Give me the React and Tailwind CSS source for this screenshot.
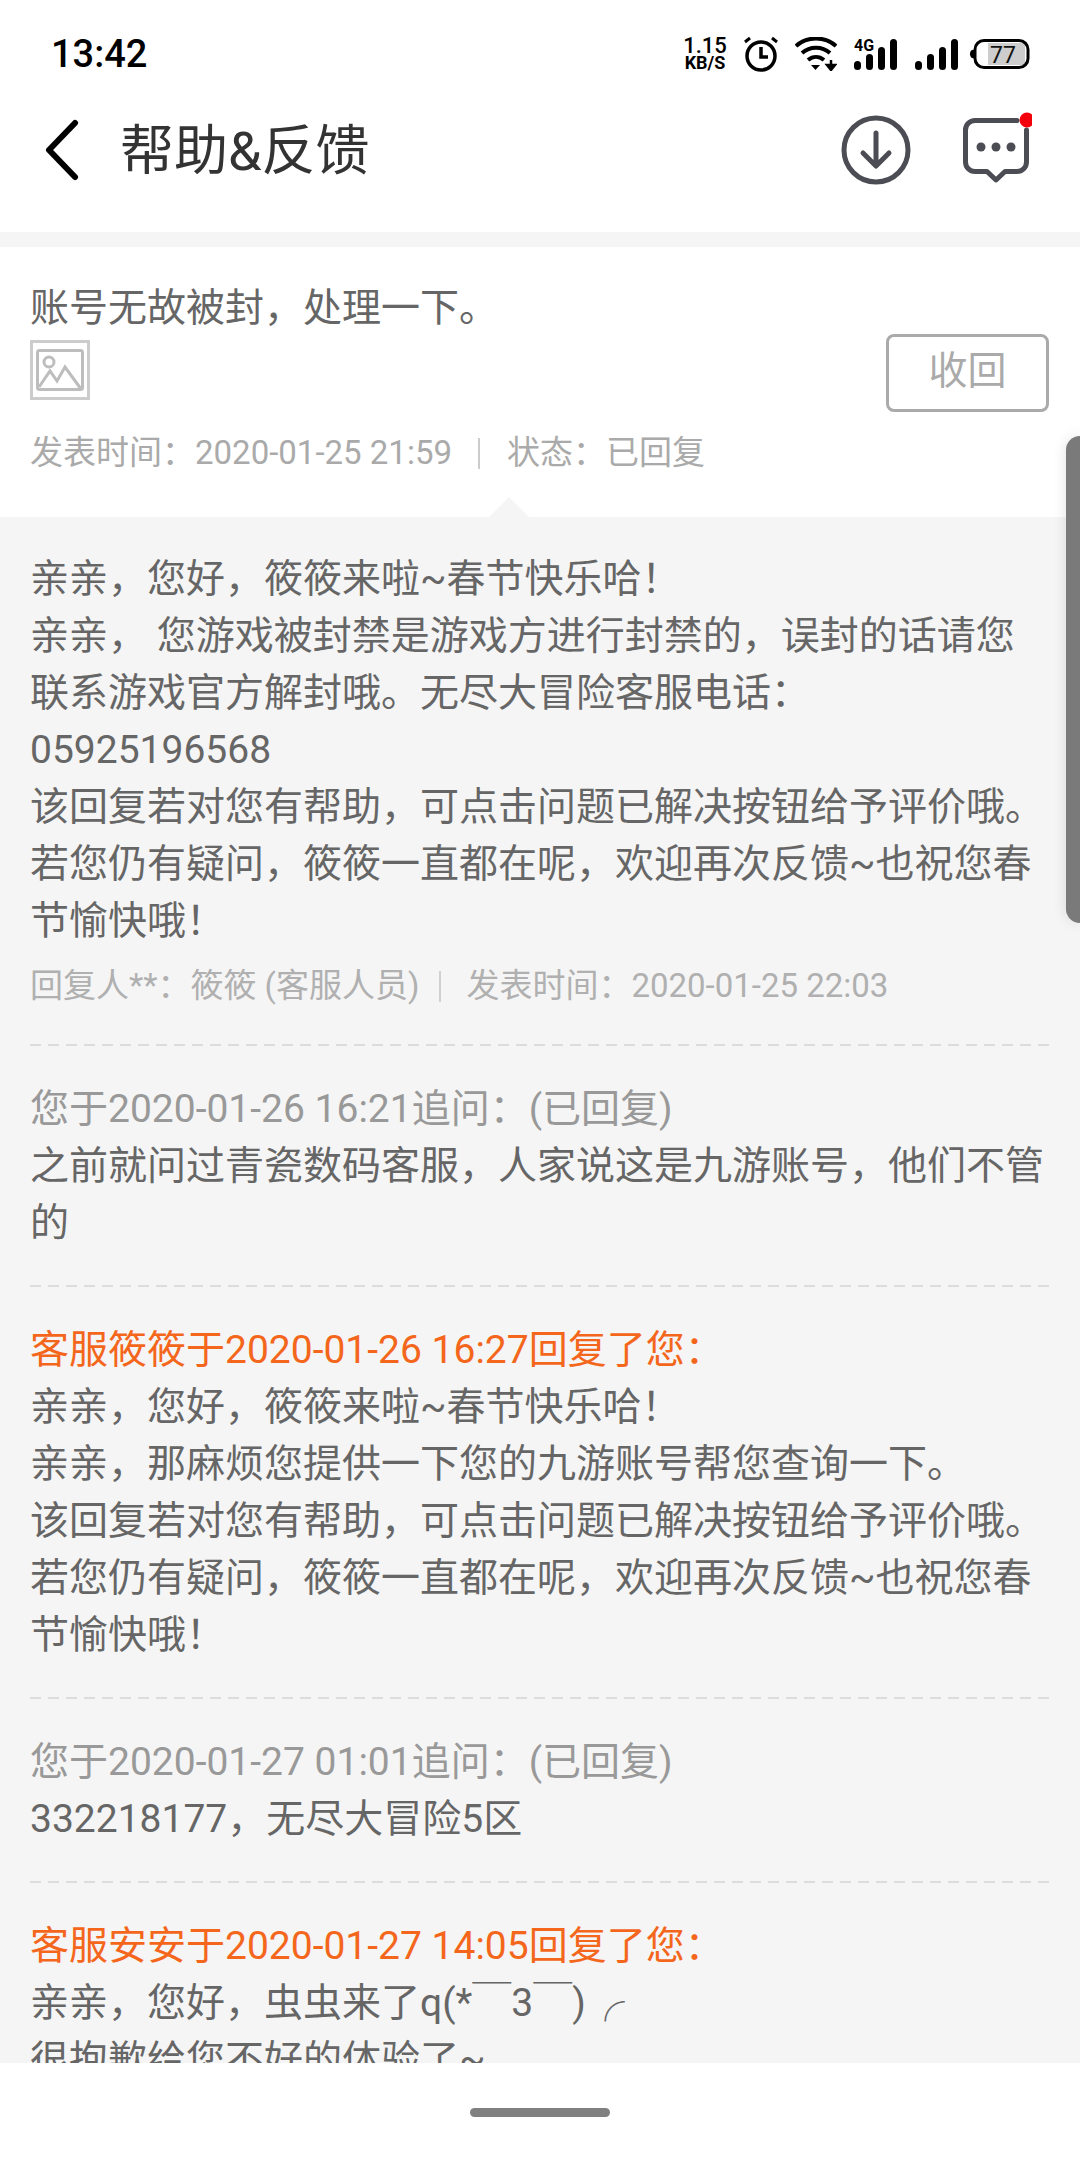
import React from "react";

const firstReply = [
  "亲亲，您好，筱筱来啦~春节快乐哈！",
  "亲亲， 您游戏被封禁是游戏方进行封禁的，误封的话请您",
  "联系游戏官方解封哦。无尽大冒险客服电话：",
  "05925196568",
  "该回复若对您有帮助，可点击问题已解决按钮给予评价哦。",
  "若您仍有疑问，筱筱一直都在呢，欢迎再次反馈~也祝您春",
  "节愉快哦！",
];

const secondReply = [
  "亲亲，您好，筱筱来啦~春节快乐哈！",
  "亲亲，那麻烦您提供一下您的九游账号帮您查询一下。",
  "该回复若对您有帮助，可点击问题已解决按钮给予评价哦。",
  "若您仍有疑问，筱筱一直都在呢，欢迎再次反馈~也祝您春",
  "节愉快哦！",
];

function Lines({ lines }) {
  return (
    <>
      {lines.map((line, i) => (
        <div key={i} className="h-[57px] leading-[57px] whitespace-nowrap">
          {line}
        </div>
      ))}
    </>
  );
}

function Dashed() {
  return (
    <div className="h-[2px] w-[1020px] bg-[repeating-linear-gradient(90deg,#dcdcdc_0,#dcdcdc_11px,transparent_11px,transparent_18px)]" />
  );
}

function Section({ title, titleClass, lines }) {
  return (
    <div className="pt-[35px] pb-[33px]">
      <div className={`h-[57px] leading-[57px] whitespace-nowrap ${titleClass}`}>{title}</div>
      <Lines lines={lines} />
    </div>
  );
}

function SignalBars({ className }) {
  return (
    <svg className={className} width="43" height="31" viewBox="0 0 43 31" fill="#000">
      <rect x="0" y="22" width="7" height="9" rx="3.5" />
      <rect x="12" y="15" width="7" height="16" rx="3.5" />
      <rect x="24" y="8" width="7" height="23" rx="3.5" />
      <rect x="36" y="0" width="7" height="31" rx="3.5" />
    </svg>
  );
}

function StatusBar() {
  return (
    <div className="h-[108px] flex items-center justify-between pl-[51px] pr-[50px]">
      <span className="text-[38px] font-medium text-black leading-none">13:42</span>
      <div className="flex items-center">
        <div className="w-[44px] flex flex-col items-center font-bold text-black leading-none">
          <span className="text-[22px] h-[17px] leading-[17px] font-medium">1.15</span>
          <span className="text-[18px] h-[17px] leading-[17px]">KB/S</span>
        </div>
        <svg className="ml-[16px]" width="36" height="36" viewBox="0 0 36 36" fill="none" stroke="#000">
          <circle cx="18" cy="20" r="14" strokeWidth="3.5" />
          <path d="M18 11v10h7" strokeWidth="3.5" />
          <path d="M2 6l5-4M34 6l-5-4" strokeWidth="3" />
        </svg>
        <svg className="ml-[16px]" width="42" height="34" viewBox="0 0 42 34" fill="none" stroke="#000">
          <path d="M1 9C12-1 30-1 41 9" strokeWidth="4" />
          <path d="M7 16c8-7 20-7 28 0" strokeWidth="4" />
          <path d="M13 23c5-4 11-4 16 0" strokeWidth="4" />
          <path d="M16 28h9l-4.500 5z" fill="#000" stroke="none" />
          <path d="M36 23v7M32 28h8l-4 5z" fill="#000" strokeWidth="2.500" />
        </svg>
        <div className="relative ml-[17px] w-[43px] h-[31px]">
          <SignalBars />
          <span className="absolute left-0 top-0 text-[16px] font-bold text-black leading-[13px]">4G</span>
        </div>
        <SignalBars className="ml-[18px]" />
        <svg className="ml-[12px]" width="60" height="30" viewBox="0 0 60 30">
          <path d="M0 15a3 4 0 0 1 4-4v8a3 4 0 0 1-4-4z" fill="#000" />
          <rect x="18" y="4" width="37" height="22" fill="#cdcdcd" />
          <rect x="5" y="1.500" width="53" height="27" rx="9" fill="none" stroke="#000" strokeWidth="3" />
          <text x="20" y="24" fontSize="23" fontFamily="Roboto" fill="#111">77</text>
        </svg>
      </div>
    </div>
  );
}

function Header() {
  return (
    <div className="h-[124px] pb-[40px] flex items-center pl-[44px] pr-[48px]">
      <svg width="38" height="64" viewBox="0 0 38 64" fill="none" stroke="#000" strokeWidth="6" strokeLinecap="round" strokeLinejoin="round">
        <path d="M31 5 5 32l26 27" />
      </svg>
      <span className="ml-[38px] mt-[3px] text-[54px] text-[#333] leading-none">帮助&amp;反馈</span>
      <div className="ml-auto flex items-center">
        <svg width="70" height="70" viewBox="0 0 70 70" fill="none" stroke="#4c4c54" strokeWidth="5" strokeLinecap="round" strokeLinejoin="round">
          <circle cx="35" cy="35" r="32" />
          <path d="M35 18v32M22 38l13 13 13-13" />
        </svg>
        <svg className="ml-[49px] mb-[4px]" width="72" height="72" viewBox="0 0 72 72" fill="none">
          <path d="M57 8.500H15a9.500 9.500 0 0 0-9.500 9.500v32a9.500 9.500 0 0 0 9.500 9.500h12l9 8.500 9-8.500h12a9.500 9.500 0 0 0 9.500-9.500V18" stroke="#4c4c54" strokeWidth="5" strokeLinecap="round" strokeLinejoin="round" />
          <circle cx="21" cy="35" r="4.500" fill="#4c4c54" />
          <circle cx="36" cy="35" r="4.500" fill="#4c4c54" />
          <circle cx="51" cy="35" r="4.500" fill="#4c4c54" />
          <circle cx="67" cy="8" r="7.500" fill="#f4000c" />
        </svg>
      </div>
    </div>
  );
}

function QuestionCard() {
  return (
    <div className="relative bg-white h-[270px] mt-[15px] px-[30px] pt-[33px] text-[#aaa]">
      <div className="text-[39px] leading-[57px] h-[57px] text-[#666]">账号无故被封，处理一下。</div>
      <div className="w-[60px] h-[60px] mt-[3px] border-[3px] border-[#ccc] flex items-center justify-center">
        <svg width="48" height="42" viewBox="0 0 48 42" fill="none" stroke="#bdbdbd" strokeWidth="3">
          <rect x="1.500" y="1.500" width="45" height="39" rx="2" />
          <circle cx="13" cy="13" r="5" />
          <path d="M3 38l11-16 7 10 8-14 16 22" />
        </svg>
      </div>
      <div className="mt-[31px] text-[33px] leading-[44px] flex items-center whitespace-nowrap">
        <span>发表时间：2020-01-25 21:59</span>
        <span className="w-[2px] h-[31px] bg-[#ccc] ml-[26px] mr-[27px]" />
        <span>状态：已回复</span>
      </div>
      <button className="absolute right-[31px] top-[87px] w-[163px] h-[78px] border-[3px] border-[#aaa] rounded-[8px] text-[39px] leading-none pb-[3px] text-[#aaa]">
        收回
      </button>
      {/* pointer into the reply area */}
      <div className="absolute left-[489px] bottom-0 w-0 h-0 border-l-[20px] border-r-[20px] border-b-[20px] border-l-transparent border-r-transparent border-b-[#f5f5f5]" />
    </div>
  );
}

function Thread() {
  return (
    <div className="flex-1 min-h-0 overflow-hidden bg-[#f5f5f5] px-[30px] pt-[34px] text-[39px] text-[#666]">
      <Lines lines={firstReply} />
      <div className="mt-[14px] h-[44px] text-[33px] leading-[44px] text-[#b0b0b0] flex items-center whitespace-nowrap">
        <span>回复人**：筱筱 (客服人员)</span>
        <span className="w-[2px] h-[31px] bg-[#d0d0d0] ml-[20px] mr-[25px]" />
        <span>发表时间：2020-01-25 22:03</span>
      </div>
      <div className="h-[36px]" />
      <Dashed />
      <Section
        title="您于2020-01-26 16:21追问：(已回复)"
        titleClass="text-[#999]"
        lines={["之前就问过青瓷数码客服，人家说这是九游账号，他们不管", "的"]}
      />
      <Dashed />
      <Section title="客服筱筱于2020-01-26 16:27回复了您：" titleClass="text-[#f4661b]" lines={secondReply} />
      <Dashed />
      <Section title="您于2020-01-27 01:01追问：(已回复)" titleClass="text-[#999]" lines={["332218177，无尽大冒险5区"]} />
      <Dashed />
      <Section
        title="客服安安于2020-01-27 14:05回复了您："
        titleClass="text-[#f4661b]"
        lines={["亲亲，您好，虫虫来了q(*￣3￣)╭", "很抱歉给您不好的体验了~"]}
      />
    </div>
  );
}

export default function App() {
  return (
    <div className="relative w-[1080px] h-[2160px] flex flex-col overflow-hidden bg-[#f5f5f5] font-[family-name:Roboto,'Noto_Sans_CJK_SC',sans-serif]">
      <div className="bg-white h-[232px]">
        <StatusBar />
        <Header />
      </div>
      <QuestionCard />
      <Thread />
      <div className="h-[97px] bg-white flex justify-center pt-[45px]">
        <div className="w-[140px] h-[9px] rounded-full bg-[#808080]" />
      </div>
      {/* edge handle */}
      <div className="absolute right-0 top-[436px] w-[14px] h-[487px] rounded-l-[20px] bg-[#7a7a7a] shadow-[0_0_14px_rgba(0,0,0,0.12)]" />
    </div>
  );
}
